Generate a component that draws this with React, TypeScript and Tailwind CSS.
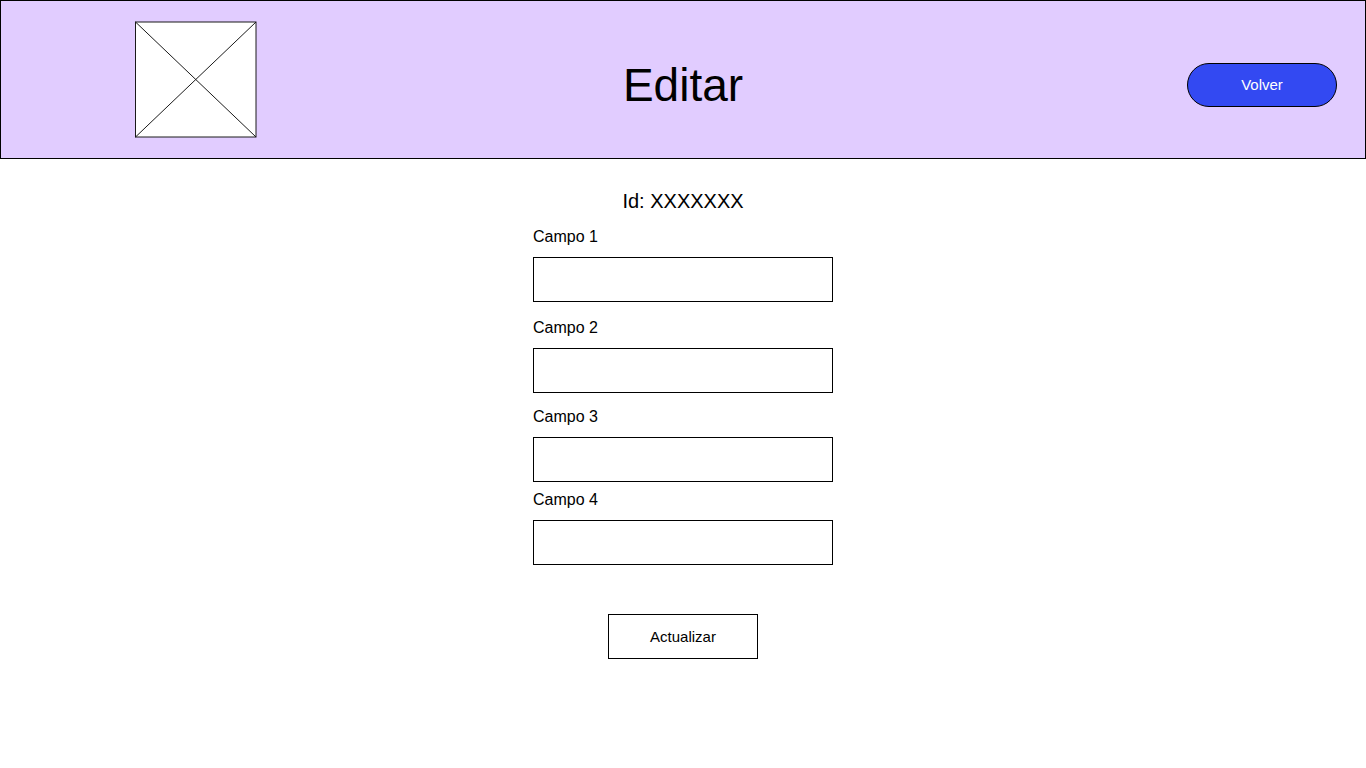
import React from "react";

type Field = { id: string; label: string; spacing: string };

const fields: Field[] = [
  { id: "campo-1", label: "Campo 1", spacing: "mt-2.5" },
  { id: "campo-2", label: "Campo 2", spacing: "mt-3.5" },
  { id: "campo-3", label: "Campo 3", spacing: "mt-3" },
  { id: "campo-4", label: "Campo 4", spacing: "mt-1.5" },
];

function Logo() {
  return (
    <svg
      role="img"
      aria-label="Logo"
      className="ml-[134px] h-[117px] w-[122px]"
      viewBox="0 0 122 117"
      fill="none"
      stroke="#1a1a1a"
    >
      <rect x="0.5" y="1" width="120.5" height="115" fill="#fff" />
      <path d="M0.5 1L121 116M121 1L0.5 116" />
    </svg>
  );
}

export default function App() {
  return (
    <div className="min-h-screen bg-white font-['Liberation_Sans',Arial,sans-serif] text-black">
      <header className="grid min-h-[159px] grid-cols-[1fr_auto_1fr] items-center border border-black bg-[#e1ccff]">
        <Logo />
        <h1 className="mt-2.5 text-[46px] leading-[52px]">Editar</h1>
        <button
          type="button"
          className="mr-7 mt-2.5 h-11 w-[150px] justify-self-end rounded-full border border-black bg-[#3349f2] text-[15px] leading-5 text-white"
        >
          Volver
        </button>
      </header>

      <main className="flex flex-col items-center px-4 pt-7">
        <h2 className="text-xl leading-7">Id: XXXXXXX</h2>
        <form
          className="flex w-full max-w-[300px] flex-col"
          onSubmit={(event) => event.preventDefault()}
        >
          {fields.map(({ id, label, spacing }) => (
            <div key={id} className={`flex flex-col gap-2 ${spacing}`}>
              <label htmlFor={id} className="text-base leading-6">
                {label}
              </label>
              <input
                id={id}
                name={id}
                type="text"
                className="h-[45px] w-full border border-black bg-white px-3 text-base"
              />
            </div>
          ))}
          <button
            type="submit"
            className="mt-[49px] h-[45px] w-[150px] self-center border border-black bg-white text-[15px] leading-5"
          >
            Actualizar
          </button>
        </form>
      </main>
    </div>
  );
}
